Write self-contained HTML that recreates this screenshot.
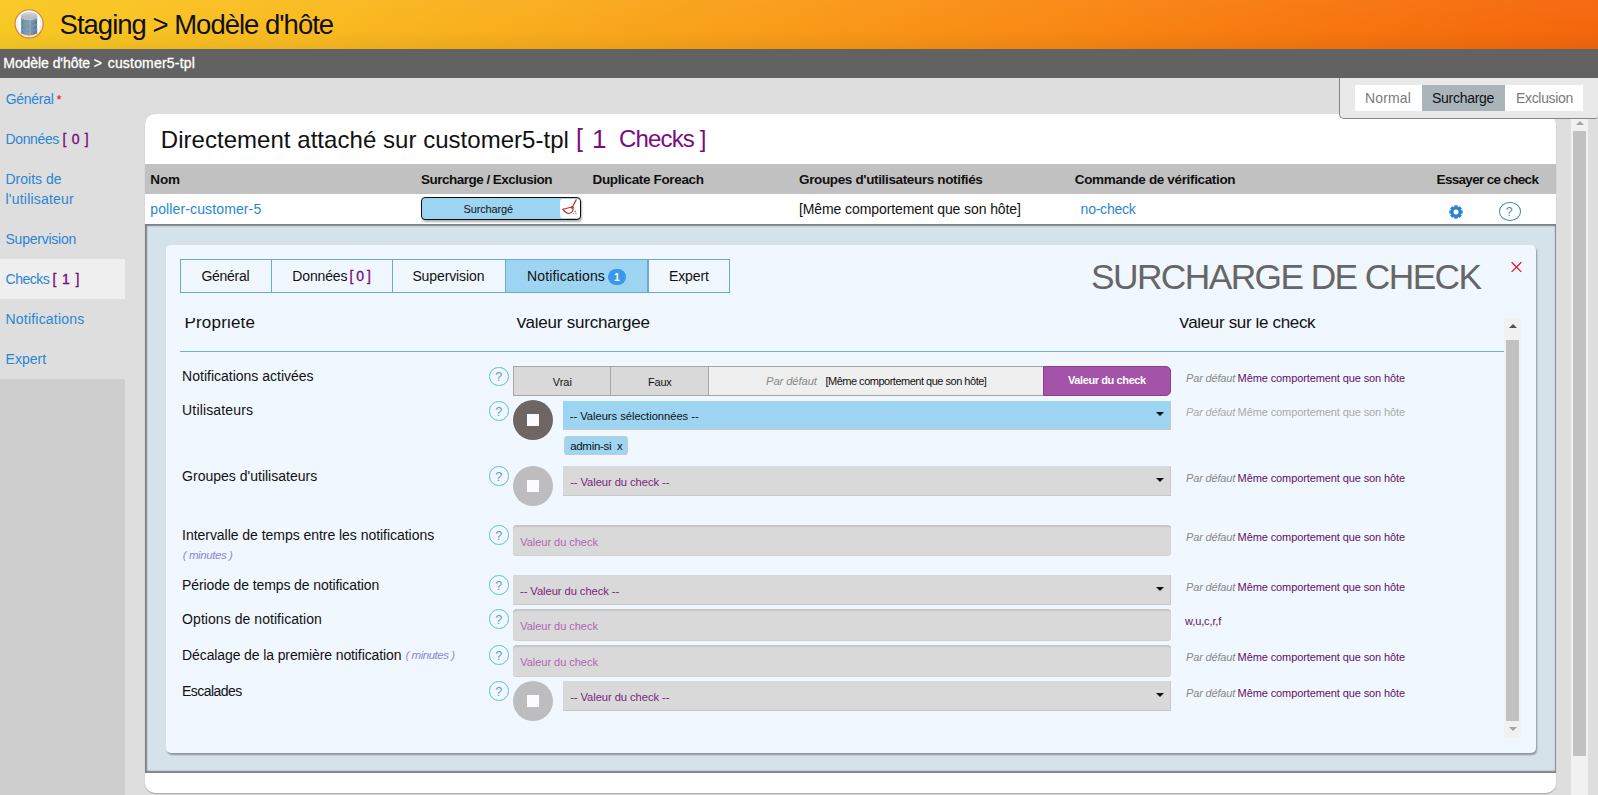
<!DOCTYPE html>
<html><head><meta charset="utf-8"><title>Staging</title>
<style>
html,body{margin:0;padding:0;}
body{width:1598px;height:795px;overflow:hidden;position:relative;background:#dedede;font-family:"Liberation Sans",sans-serif;}
.t{position:absolute;white-space:nowrap;}
</style></head><body>
<div style="position:absolute;left:0px;top:0px;width:1598px;height:49px;background:linear-gradient(95deg,#f9c924 0%,#f9ba20 20%,#f9a01a 45%,#f98a14 65%,#f7770f 82%,#f5660c 100%);"></div>
<div style="position:absolute;left:0px;top:0px;width:1598px;height:49px;background:linear-gradient(to bottom,rgba(255,255,255,0.03) 0%,rgba(0,0,0,0) 60%,rgba(0,0,0,0.05) 100%);"></div>
<svg style="position:absolute;left:12px;top:6px" width="36" height="36" viewBox="0 0 36 36">
<defs><radialGradient id="cg" cx="50%" cy="45%" r="55%"><stop offset="60%" stop-color="#ffffff"/><stop offset="100%" stop-color="#e6e6e6"/></radialGradient>
<linearGradient id="bg1" x1="0" x2="1" y1="0" y2="0"><stop offset="0" stop-color="#7d7d7d"/><stop offset="0.35" stop-color="#9a9a9a"/><stop offset="0.7" stop-color="#8a8a8a"/><stop offset="1" stop-color="#6f6f6f"/></linearGradient>
<linearGradient id="tg1" x1="0" x2="0" y1="0" y2="1"><stop offset="0" stop-color="#d8d8d8"/><stop offset="1" stop-color="#b0b0b0"/></linearGradient></defs>
<circle cx="17.1" cy="17.8" r="14.1" fill="url(#cg)" stroke="#c98532" stroke-width="1.1"/>
<path d="M9.1 9.6 L9.1 27.6 Q17.1 31.8 25.1 27.6 L25.1 9.6 Z" fill="url(#bg1)"/>
<ellipse cx="17.1" cy="9.6" rx="8" ry="3.6" fill="url(#tg1)"/>
<path d="M9.1 12.2 Q17.1 16.6 25.1 12.2 L25.1 9.6 Q17.1 13.6 9.1 9.6 Z" fill="#bdbdbd"/>
<path d="M9.1 13.4 Q17.1 17.6 25.1 13.4" stroke="#45a6e8" stroke-width="1.6" fill="none"/>
<path d="M9.1 18.4 Q17.1 22.6 25.1 18.4" stroke="#45a6e8" stroke-width="1.6" fill="none"/>
<path d="M9.1 23.1 Q17.1 27.3 25.1 23.1" stroke="#45a6e8" stroke-width="1.6" fill="none"/>
<line x1="18.1" y1="13" x2="18.1" y2="29.5" stroke="rgba(255,255,255,0.35)" stroke-width="0.8"/>
</svg>
<div class="t" style="left:59.6px;top:10.52px;font-size:27.5px;line-height:27.5px;color:#111;font-weight:normal;font-style:normal;letter-spacing:-1.000px;">Staging &gt; Modèle d'hôte</div>
<div style="position:absolute;left:0px;top:49px;width:1598px;height:29px;background:#626262;"></div>
<div class="t" style="left:3.3px;top:55.55px;font-size:14px;line-height:14px;color:#fff;font-weight:normal;font-style:normal;letter-spacing:-0.065px;-webkit-text-stroke:0.3px #fff;">Modèle d'hôte &gt;</div>
<div class="t" style="left:107.7px;top:55.55px;font-size:14px;line-height:14px;color:#fff;font-weight:normal;font-style:normal;letter-spacing:0.192px;-webkit-text-stroke:0.3px #fff;">customer5-tpl</div>
<div style="position:absolute;left:0px;top:259px;width:125px;height:40px;background:#efefef;"></div>
<div style="position:absolute;left:0px;top:379px;width:125px;height:416px;background:#cecece;"></div>
<div class="t" style="left:5.7px;top:92.15px;font-size:14px;line-height:14px;color:#2886d4;font-weight:normal;font-style:normal;letter-spacing:-0.287px;">Général</div>
<div class="t" style="left:56.6px;top:93.00px;font-size:13px;line-height:13px;color:#e8001c;font-weight:normal;font-style:normal;">*</div>
<div class="t" style="left:5.5px;top:132.15px;font-size:14px;line-height:14px;color:#2886d4;font-weight:normal;font-style:normal;letter-spacing:-0.363px;">Données</div>
<div class="t" style="left:62.4px;top:132.15px;font-size:14px;line-height:14px;color:#790c80;font-weight:normal;font-style:normal;letter-spacing:0.731px;-webkit-text-stroke:0.35px #790c80;">[ 0 ]</div>
<div class="t" style="left:5.5px;top:172.35px;font-size:14px;line-height:14px;color:#2886d4;font-weight:normal;font-style:normal;letter-spacing:-0.002px;">Droits de</div>
<div class="t" style="left:5.5px;top:191.65px;font-size:14px;line-height:14px;color:#2886d4;font-weight:normal;font-style:normal;letter-spacing:0.215px;">l'utilisateur</div>
<div class="t" style="left:5.5px;top:231.85px;font-size:14px;line-height:14px;color:#2886d4;font-weight:normal;font-style:normal;letter-spacing:-0.241px;">Supervision</div>
<div class="t" style="left:5.5px;top:271.95px;font-size:14px;line-height:14px;color:#2886d4;font-weight:normal;font-style:normal;letter-spacing:-0.480px;">Checks</div>
<div class="t" style="left:52.6px;top:271.95px;font-size:14px;line-height:14px;color:#790c80;font-weight:normal;font-style:normal;letter-spacing:0.871px;-webkit-text-stroke:0.35px #790c80;">[ 1 ]</div>
<div class="t" style="left:5.5px;top:311.55px;font-size:14px;line-height:14px;color:#2886d4;font-weight:normal;font-style:normal;letter-spacing:0.211px;">Notifications</div>
<div class="t" style="left:5.5px;top:351.65px;font-size:14px;line-height:14px;color:#2886d4;font-weight:normal;font-style:normal;letter-spacing:0.040px;">Expert</div>
<div style="position:absolute;left:145px;top:114px;width:1411px;height:679px;background:#fff;border-radius:10px;box-shadow:0 1px 1px rgba(0,0,0,0.25);"></div>
<div class="t" style="left:160.8px;top:127.68px;font-size:24px;line-height:24px;color:#111;font-weight:normal;font-style:normal;letter-spacing:0.037px;">Directement attaché sur customer5-tpl</div>
<div class="t" style="left:576px;top:125.84px;font-size:25px;line-height:25px;color:#790c80;font-weight:normal;font-style:normal;">[</div>
<div class="t" style="left:592px;top:125.59px;font-size:26px;line-height:26px;color:#790c80;font-weight:normal;font-style:normal;">1</div>
<div class="t" style="left:618.9px;top:127.28px;font-size:24px;line-height:24px;color:#790c80;font-weight:normal;font-style:normal;letter-spacing:-0.820px;">Checks ]</div>
<div style="position:absolute;left:145px;top:164px;width:1411px;height:29.5px;background:#c1c1c1;"></div>
<div class="t" style="left:150.3px;top:172.87px;font-size:13.5px;line-height:13.5px;color:#111;font-weight:bold;font-style:normal;letter-spacing:-0.166px;">Nom</div>
<div class="t" style="left:421px;top:172.87px;font-size:13.5px;line-height:13.5px;color:#111;font-weight:bold;font-style:normal;letter-spacing:-0.514px;">Surcharge / Exclusion</div>
<div class="t" style="left:592.5px;top:172.87px;font-size:13.5px;line-height:13.5px;color:#111;font-weight:bold;font-style:normal;letter-spacing:-0.349px;">Duplicate Foreach</div>
<div class="t" style="left:799px;top:172.87px;font-size:13.5px;line-height:13.5px;color:#111;font-weight:bold;font-style:normal;letter-spacing:-0.355px;">Groupes d'utilisateurs notifiés</div>
<div class="t" style="left:1074.8px;top:172.87px;font-size:13.5px;line-height:13.5px;color:#111;font-weight:bold;font-style:normal;letter-spacing:-0.350px;">Commande de vérification</div>
<div class="t" style="left:1436.6px;top:172.87px;font-size:13.5px;line-height:13.5px;color:#111;font-weight:bold;font-style:normal;letter-spacing:-0.687px;">Essayer ce check</div>
<div class="t" style="left:150.3px;top:201.85px;font-size:14px;line-height:14px;color:#2886d4;font-weight:normal;font-style:normal;letter-spacing:0.122px;">poller-customer-5</div>
<div style="position:absolute;left:421px;top:197px;width:158px;height:20.5px;background:#9dd4f1;border:1px solid #111;border-radius:4px;box-shadow:1px 2px 2px rgba(0,0,0,0.3);"></div>
<div class="t" style="left:463.5px;top:203.69px;font-size:11px;line-height:11px;color:#111;font-weight:normal;font-style:normal;letter-spacing:-0.139px;">Surchargé</div>
<div style="position:absolute;left:560px;top:199px;width:20px;height:18.5px;background:#fff;border-radius:3px;"></div>
<svg style="position:absolute;left:561px;top:199px" width="18" height="18" viewBox="0 0 18 18">
<path d="M15.4 0.4 L11.4 8" stroke="#b0392c" stroke-width="1.2" fill="none"/>
<path d="M11.3 7.8 C9 8.6 4.5 9.6 1.9 10.3 C3.5 12.6 6 14.2 8 14.5 C9.6 14 11.3 13.2 11.6 12.4 C12.2 10.8 12.2 9.2 11.3 7.8 Z" stroke="#b0392c" stroke-width="1.2" fill="none"/>
<circle cx="11.3" cy="8.6" r="1.4" fill="#b0392c"/>
<circle cx="14.2" cy="12.5" r="0.7" fill="#b0392c"/><circle cx="12.6" cy="14.5" r="0.55" fill="#b0392c"/><circle cx="15" cy="14.6" r="0.55" fill="#b0392c"/>
</svg>
<div class="t" style="left:799px;top:201.85px;font-size:14px;line-height:14px;color:#111;font-weight:normal;font-style:normal;letter-spacing:-0.097px;">[Même comportement que son hôte]</div>
<div class="t" style="left:1080.6px;top:201.85px;font-size:14px;line-height:14px;color:#2886d4;font-weight:normal;font-style:normal;letter-spacing:-0.238px;">no-check</div>
<svg style="position:absolute;left:1449px;top:205px" width="14" height="14" viewBox="0 0 14 14">
<g fill="#2d80d0"><circle cx="7" cy="7" r="5.2"/>
<rect x="5.3" y="0.3" width="3.4" height="13.4"/><rect x="0.3" y="5.3" width="13.4" height="3.4"/>
<rect x="5.3" y="0.3" width="3.4" height="13.4" transform="rotate(45 7 7)"/><rect x="0.3" y="5.3" width="13.4" height="3.4" transform="rotate(45 7 7)"/></g>
<circle cx="7" cy="7" r="2.5" fill="#fff"/></svg>
<div style="position:absolute;left:1499px;top:202px;width:19.5px;height:16.5px;border:1.5px solid #3a88aa;border-radius:50%;"></div>
<div class="t" style="left:1505.8px;top:205.92px;font-size:12.5px;line-height:12.5px;color:#5a8aa8;font-weight:normal;font-style:normal;">?</div>
<div style="position:absolute;left:145px;top:224px;width:1411px;height:549px;background:#d6e2ea;box-shadow:inset 2px 2px 1.5px #7a7f83, inset 0 -2px 1.5px #7a7f83, inset -1px 0 1px #8a8f93;"></div>
<div style="position:absolute;left:166px;top:245px;width:1370px;height:507.5px;background:#f0f7fe;border-radius:5px;box-shadow:1px 2px 2px rgba(0,0,0,0.35);"></div>
<div style="position:absolute;left:180px;top:259px;width:549.5px;height:34px;border:1px solid #6aaad0;box-sizing:border-box;"></div>
<div style="position:absolute;left:505px;top:259px;width:142.5px;height:34px;background:#9dd4f1;border-top:1px solid #6aaad0;border-bottom:1px solid #6aaad0;box-sizing:border-box;"></div>
<div style="position:absolute;left:270.5px;top:259px;width:1.5px;height:34px;background:#6aaad0;"></div>
<div style="position:absolute;left:391.5px;top:259px;width:1.5px;height:34px;background:#6aaad0;"></div>
<div style="position:absolute;left:504.5px;top:259px;width:1.5px;height:34px;background:#6aaad0;"></div>
<div style="position:absolute;left:647px;top:259px;width:1.5px;height:34px;background:#6aaad0;"></div>
<div class="t" style="left:201.5px;top:269.35px;font-size:14px;line-height:14px;color:#111;font-weight:normal;font-style:normal;letter-spacing:-0.287px;">Général</div>
<div class="t" style="left:292.3px;top:269.35px;font-size:14px;line-height:14px;color:#111;font-weight:normal;font-style:normal;letter-spacing:-0.149px;">Données</div>
<div class="t" style="left:349.5px;top:269.35px;font-size:14px;line-height:14px;color:#790c80;font-weight:normal;font-style:normal;letter-spacing:-0.469px;-webkit-text-stroke:0.3px #790c80;">[ 0 ]</div>
<div class="t" style="left:412.4px;top:269.35px;font-size:14px;line-height:14px;color:#111;font-weight:normal;font-style:normal;letter-spacing:-0.105px;">Supervision</div>
<div class="t" style="left:527px;top:269.35px;font-size:14px;line-height:14px;color:#111;font-weight:normal;font-style:normal;letter-spacing:0.134px;">Notifications</div>
<div style="position:absolute;left:608px;top:269px;width:18px;height:15.7px;background:#3a98ec;border-radius:8px;"></div>
<div class="t" style="left:614px;top:272.31px;font-size:10.5px;line-height:10.5px;color:#fff;font-weight:bold;font-style:normal;">1</div>
<div class="t" style="left:668.9px;top:269.35px;font-size:14px;line-height:14px;color:#111;font-weight:normal;font-style:normal;letter-spacing:-0.094px;">Expert</div>
<div class="t" style="left:1091px;top:259.02px;font-size:35.3px;line-height:35.3px;color:#666;font-weight:normal;font-style:normal;letter-spacing:-1.569px;">SURCHARGE DE CHECK</div>
<svg style="position:absolute;left:1510px;top:261px" width="13" height="12" viewBox="0 0 13 12">
<path d="M1.6 1.2 L11.3 10.9 M11.3 1.2 L1.6 10.9" stroke="#f01020" stroke-width="1.25"/></svg>
<div style="position:absolute;left:166px;top:318px;width:1338px;height:420px;overflow:hidden;">
<div class="t" style="left:18.5px;top:-3.79px;font-size:17px;line-height:17px;color:#111;font-weight:normal;font-style:normal;letter-spacing:0.180px;">Propriété</div>
<div class="t" style="left:349.70000000000005px;top:-3.79px;font-size:17px;line-height:17px;color:#111;font-weight:normal;font-style:normal;letter-spacing:-0.215px;">Valeur surchargée</div>
<div class="t" style="left:1012.5px;top:-3.79px;font-size:17px;line-height:17px;color:#111;font-weight:normal;font-style:normal;letter-spacing:-0.348px;">Valeur sur le check</div>
<div style="position:absolute;left:14px;top:32.5px;width:1324px;height:1.5px;background:#6ab2d6;"></div>
<div class="t" style="left:16.099999999999994px;top:51.15px;font-size:14px;line-height:14px;color:#111;font-weight:normal;font-style:normal;letter-spacing:-0.000px;">Notifications activées</div>
<div style="position:absolute;left:323px;top:48.5px;width:17.5px;height:17.5px;border:1.3px solid #5bbde0;border-radius:50%;"></div>
<div class="t" style="left:329.3px;top:53.12px;font-size:12.5px;line-height:12.5px;color:#5a9ec6;font-weight:normal;font-style:normal;">?</div>
<div style="position:absolute;left:347px;top:48px;width:97.8px;height:30px;background:#d9d9d9;border:1px solid #a6a6a6;box-sizing:border-box;"></div>
<div style="position:absolute;left:444px;top:48px;width:99px;height:30px;background:#d9d9d9;border:1px solid #a6a6a6;box-sizing:border-box;"></div>
<div style="position:absolute;left:542.5px;top:48px;width:335px;height:30px;background:#efefef;border:1px solid #a6a6a6;border-left:none;box-sizing:border-box;"></div>
<div class="t" style="left:386.79999999999995px;top:58.69px;font-size:11px;line-height:11px;color:#111;font-weight:normal;font-style:normal;letter-spacing:-0.038px;">Vrai</div>
<div class="t" style="left:482px;top:58.69px;font-size:11px;line-height:11px;color:#111;font-weight:normal;font-style:normal;letter-spacing:-0.214px;">Faux</div>
<div class="t" style="left:600px;top:57.82px;font-size:11.2px;line-height:11.2px;color:#888;font-weight:normal;font-style:italic;letter-spacing:-0.082px;">Par défaut</div>
<div class="t" style="left:659.4px;top:57.69px;font-size:11px;line-height:11px;color:#111;font-weight:normal;font-style:normal;letter-spacing:-0.491px;">[Même comportement que son hôte]</div>
<div style="position:absolute;left:877px;top:48px;width:128px;height:30px;background:#a353a8;border:1px solid #8c3e92;border-radius:0 5px 5px 0;box-sizing:border-box;"></div>
<div class="t" style="left:902px;top:57.39px;font-size:11px;line-height:11px;color:#fff;font-weight:bold;font-style:normal;letter-spacing:-0.397px;">Valeur du check</div>
<div class="t" style="left:1020px;top:54.59px;font-size:11px;line-height:11px;color:#888;font-weight:normal;font-style:italic;letter-spacing:-0.156px;">Par défaut</div>
<div class="t" style="left:1071.6px;top:54.59px;font-size:11px;line-height:11px;color:#62106a;font-weight:normal;font-style:normal;letter-spacing:-0.106px;">Même comportement que son hôte</div>
<div class="t" style="left:16.099999999999994px;top:85.15px;font-size:14px;line-height:14px;color:#111;font-weight:normal;font-style:normal;letter-spacing:0.147px;">Utilisateurs</div>
<div style="position:absolute;left:323px;top:83px;width:17.5px;height:17.5px;border:1.3px solid #5bbde0;border-radius:50%;"></div>
<div class="t" style="left:329.3px;top:87.62px;font-size:12.5px;line-height:12.5px;color:#5a9ec6;font-weight:normal;font-style:normal;">?</div>
<div style="position:absolute;left:347px;top:82px;width:40px;height:40px;background:#6e6663;border-radius:50%;"></div>
<div style="position:absolute;left:360.8px;top:95.8px;width:12.6px;height:12.6px;background:#fafcff;"></div>
<div style="position:absolute;left:397.3px;top:82.6px;width:607.5px;height:29.2px;background:#9cd4f1;border-right:1px solid #c8c8c8;border-bottom:1px solid #c8c8c8;box-sizing:border-box;"></div>
<div class="t" style="left:403.79999999999995px;top:92.52px;font-size:11.2px;line-height:11.2px;color:#111;font-weight:normal;font-style:normal;letter-spacing:-0.035px;">-- Valeurs sélectionnées --</div>
<div style="position:absolute;left:989.6px;top:93.6px;width:0px;height:0px;border-left:4.4px solid transparent;border-right:4.4px solid transparent;border-top:4.8px solid #111;"></div>
<div class="t" style="left:1020px;top:89.29px;font-size:11px;line-height:11px;color:#aaa;font-weight:normal;font-style:italic;letter-spacing:-0.156px;">Par défaut</div>
<div class="t" style="left:1071.6px;top:89.29px;font-size:11px;line-height:11px;color:#aaa;font-weight:normal;font-style:normal;letter-spacing:-0.106px;">Même comportement que son hôte</div>
<div style="position:absolute;left:398.3px;top:118.2px;width:64px;height:19.3px;background:#9dd5f2;border:1px solid #c9c9c9;border-radius:3px;box-sizing:border-box;"></div>
<div class="t" style="left:404.20000000000005px;top:122.57px;font-size:11.5px;line-height:11.5px;color:#111;font-weight:normal;font-style:normal;letter-spacing:-0.307px;">admin-si</div>
<div class="t" style="left:451px;top:122.57px;font-size:11.5px;line-height:11.5px;color:#111;font-weight:normal;font-style:normal;">x</div>
<div class="t" style="left:16.099999999999994px;top:150.75px;font-size:14px;line-height:14px;color:#111;font-weight:normal;font-style:normal;letter-spacing:0.006px;">Groupes d'utilisateurs</div>
<div style="position:absolute;left:323px;top:148px;width:17.5px;height:17.5px;border:1.3px solid #5bbde0;border-radius:50%;"></div>
<div class="t" style="left:329.3px;top:152.62px;font-size:12.5px;line-height:12.5px;color:#5a9ec6;font-weight:normal;font-style:normal;">?</div>
<div style="position:absolute;left:347px;top:148px;width:40px;height:40px;background:#bdbdc0;border-radius:50%;"></div>
<div style="position:absolute;left:360.8px;top:161.8px;width:12.6px;height:12.6px;background:#fafcff;"></div>
<div style="position:absolute;left:397px;top:148.2px;width:608px;height:29.5px;background:#d9d9d9;border-right:1px solid #c8c8c8;border-bottom:1px solid #c8c8c8;box-sizing:border-box;"></div>
<div class="t" style="left:404.20000000000005px;top:159.02px;font-size:11.2px;line-height:11.2px;color:#7a1f80;font-weight:normal;font-style:normal;letter-spacing:-0.067px;">-- Valeur du check --</div>
<div style="position:absolute;left:989.6px;top:159.6px;width:0px;height:0px;border-left:4.4px solid transparent;border-right:4.4px solid transparent;border-top:4.8px solid #111;"></div>
<div class="t" style="left:1020px;top:155.09px;font-size:11px;line-height:11px;color:#888;font-weight:normal;font-style:italic;letter-spacing:-0.156px;">Par défaut</div>
<div class="t" style="left:1071.6px;top:155.09px;font-size:11px;line-height:11px;color:#62106a;font-weight:normal;font-style:normal;letter-spacing:-0.106px;">Même comportement que son hôte</div>
<div class="t" style="left:16.099999999999994px;top:210.05px;font-size:14px;line-height:14px;color:#111;font-weight:normal;font-style:normal;letter-spacing:-0.039px;">Intervalle de temps entre les notifications</div>
<div class="t" style="left:16.69999999999999px;top:232.07px;font-size:11.5px;line-height:11.5px;color:#8d86d6;font-weight:normal;font-style:italic;letter-spacing:-0.411px;">( minutes )</div>
<div style="position:absolute;left:323px;top:207px;width:17.5px;height:17.5px;border:1.3px solid #5bbde0;border-radius:50%;"></div>
<div class="t" style="left:329.3px;top:211.62px;font-size:12.5px;line-height:12.5px;color:#5a9ec6;font-weight:normal;font-style:normal;">?</div>
<div style="position:absolute;left:347.1px;top:207px;width:658px;height:31.3px;background:#d9d9d9;border-radius:4px;box-shadow:inset 0 2px 1px #c4c4c4, inset 0 -1px 0 #cfcfcf;"></div>
<div class="t" style="left:354.29999999999995px;top:218.79px;font-size:11px;line-height:11px;color:#b066b3;font-weight:normal;font-style:normal;letter-spacing:-0.031px;">Valeur du check</div>
<div class="t" style="left:1020px;top:213.89px;font-size:11px;line-height:11px;color:#888;font-weight:normal;font-style:italic;letter-spacing:-0.156px;">Par défaut</div>
<div class="t" style="left:1071.6px;top:213.89px;font-size:11px;line-height:11px;color:#62106a;font-weight:normal;font-style:normal;letter-spacing:-0.106px;">Même comportement que son hôte</div>
<div class="t" style="left:16.099999999999994px;top:260.35px;font-size:14px;line-height:14px;color:#111;font-weight:normal;font-style:normal;letter-spacing:-0.094px;">Période de temps de notification</div>
<div style="position:absolute;left:323px;top:257px;width:17.5px;height:17.5px;border:1.3px solid #5bbde0;border-radius:50%;"></div>
<div class="t" style="left:329.3px;top:261.62px;font-size:12.5px;line-height:12.5px;color:#5a9ec6;font-weight:normal;font-style:normal;">?</div>
<div style="position:absolute;left:347.1px;top:257.1px;width:658px;height:29.6px;background:#d9d9d9;border-right:1px solid #c8c8c8;border-bottom:1px solid #c8c8c8;box-sizing:border-box;"></div>
<div class="t" style="left:354px;top:268.02px;font-size:11.2px;line-height:11.2px;color:#7a1f80;font-weight:normal;font-style:normal;letter-spacing:-0.067px;">-- Valeur du check --</div>
<div style="position:absolute;left:989.6px;top:268.6px;width:0px;height:0px;border-left:4.4px solid transparent;border-right:4.4px solid transparent;border-top:4.8px solid #111;"></div>
<div class="t" style="left:1020px;top:264.19px;font-size:11px;line-height:11px;color:#888;font-weight:normal;font-style:italic;letter-spacing:-0.156px;">Par défaut</div>
<div class="t" style="left:1071.6px;top:264.19px;font-size:11px;line-height:11px;color:#62106a;font-weight:normal;font-style:normal;letter-spacing:-0.106px;">Même comportement que son hôte</div>
<div class="t" style="left:16.099999999999994px;top:294.15px;font-size:14px;line-height:14px;color:#111;font-weight:normal;font-style:normal;letter-spacing:0.055px;">Options de notification</div>
<div style="position:absolute;left:323px;top:291px;width:17.5px;height:17.5px;border:1.3px solid #5bbde0;border-radius:50%;"></div>
<div class="t" style="left:329.3px;top:295.62px;font-size:12.5px;line-height:12.5px;color:#5a9ec6;font-weight:normal;font-style:normal;">?</div>
<div style="position:absolute;left:347.1px;top:291.3px;width:658px;height:31.3px;background:#d9d9d9;border-radius:4px;box-shadow:inset 0 2px 1px #c4c4c4, inset 0 -1px 0 #cfcfcf;"></div>
<div class="t" style="left:354.29999999999995px;top:303.09px;font-size:11px;line-height:11px;color:#b066b3;font-weight:normal;font-style:normal;letter-spacing:-0.031px;">Valeur du check</div>
<div class="t" style="left:1019px;top:297.89px;font-size:11px;line-height:11px;color:#62106a;font-weight:normal;font-style:normal;letter-spacing:-0.121px;">w,u,c,r,f</div>
<div class="t" style="left:16.099999999999994px;top:330.15px;font-size:14px;line-height:14px;color:#111;font-weight:normal;font-style:normal;letter-spacing:-0.115px;">Décalage de la première notification</div>
<div class="t" style="left:239.39999999999998px;top:332.27px;font-size:11.5px;line-height:11.5px;color:#8d86d6;font-weight:normal;font-style:italic;letter-spacing:-0.456px;">( minutes )</div>
<div style="position:absolute;left:323px;top:327px;width:17.5px;height:17.5px;border:1.3px solid #5bbde0;border-radius:50%;"></div>
<div class="t" style="left:329.3px;top:331.62px;font-size:12.5px;line-height:12.5px;color:#5a9ec6;font-weight:normal;font-style:normal;">?</div>
<div style="position:absolute;left:347.1px;top:327.3px;width:658px;height:31.3px;background:#d9d9d9;border-radius:4px;box-shadow:inset 0 2px 1px #c4c4c4, inset 0 -1px 0 #cfcfcf;"></div>
<div class="t" style="left:354.29999999999995px;top:339.09px;font-size:11px;line-height:11px;color:#b066b3;font-weight:normal;font-style:normal;letter-spacing:-0.031px;">Valeur du check</div>
<div class="t" style="left:1020px;top:333.99px;font-size:11px;line-height:11px;color:#888;font-weight:normal;font-style:italic;letter-spacing:-0.156px;">Par défaut</div>
<div class="t" style="left:1071.6px;top:333.99px;font-size:11px;line-height:11px;color:#62106a;font-weight:normal;font-style:normal;letter-spacing:-0.106px;">Même comportement que son hôte</div>
<div class="t" style="left:16.099999999999994px;top:366.15px;font-size:14px;line-height:14px;color:#111;font-weight:normal;font-style:normal;letter-spacing:-0.566px;">Escalades</div>
<div style="position:absolute;left:323px;top:363px;width:17.5px;height:17.5px;border:1.3px solid #5bbde0;border-radius:50%;"></div>
<div class="t" style="left:329.3px;top:367.62px;font-size:12.5px;line-height:12.5px;color:#5a9ec6;font-weight:normal;font-style:normal;">?</div>
<div style="position:absolute;left:347px;top:363px;width:40px;height:40px;background:#bdbdc0;border-radius:50%;"></div>
<div style="position:absolute;left:360.8px;top:376.8px;width:12.6px;height:12.6px;background:#fafcff;"></div>
<div style="position:absolute;left:397px;top:363.3px;width:608px;height:29.4px;background:#d9d9d9;border-right:1px solid #c8c8c8;border-bottom:1px solid #c8c8c8;box-sizing:border-box;"></div>
<div class="t" style="left:404.20000000000005px;top:374.02px;font-size:11.2px;line-height:11.2px;color:#7a1f80;font-weight:normal;font-style:normal;letter-spacing:-0.067px;">-- Valeur du check --</div>
<div style="position:absolute;left:989.6px;top:374.6px;width:0px;height:0px;border-left:4.4px solid transparent;border-right:4.4px solid transparent;border-top:4.8px solid #111;"></div>
<div class="t" style="left:1020px;top:370.19px;font-size:11px;line-height:11px;color:#888;font-weight:normal;font-style:italic;letter-spacing:-0.156px;">Par défaut</div>
<div class="t" style="left:1071.6px;top:370.19px;font-size:11px;line-height:11px;color:#62106a;font-weight:normal;font-style:normal;letter-spacing:-0.106px;">Même comportement que son hôte</div>
</div>
<div style="position:absolute;left:1504px;top:318px;width:17px;height:420px;background:#f1f1f1;"></div>
<div style="position:absolute;left:1506px;top:340px;width:13px;height:381px;background:#c1c1c1;"></div>
<div style="position:absolute;left:1508.5px;top:324px;width:0px;height:0px;border-left:4px solid transparent;border-right:4px solid transparent;border-bottom:4px solid #505050;"></div>
<div style="position:absolute;left:1508.5px;top:727px;width:0px;height:0px;border-left:4px solid transparent;border-right:4px solid transparent;border-top:4px solid #a3a3a3;"></div>
<div style="position:absolute;left:1571px;top:118px;width:17px;height:677px;background:#f1f1f1;"></div>
<div style="position:absolute;left:1573px;top:131.4px;width:13px;height:624.6px;background:#c1c1c1;"></div>
<div style="position:absolute;left:1575.5px;top:121px;width:0px;height:0px;border-left:4px solid transparent;border-right:4px solid transparent;border-bottom:4px solid #a3a3a3;"></div>
<div style="position:absolute;left:1339px;top:78px;width:259px;height:41px;background:#e9e9e9;border-left:1.5px solid #858585;border-bottom:1.5px solid #858585;border-bottom-left-radius:5px;border-bottom-right-radius:3px;box-sizing:border-box;"></div>
<div style="position:absolute;left:1355px;top:85px;width:228px;height:26px;background:#fff;"></div>
<div style="position:absolute;left:1422px;top:85px;width:83px;height:26px;background:#a9b4bb;"></div>
<div class="t" style="left:1365px;top:90.75px;font-size:14px;line-height:14px;color:#7a7a7a;font-weight:normal;font-style:normal;letter-spacing:0.147px;">Normal</div>
<div class="t" style="left:1432px;top:90.75px;font-size:14px;line-height:14px;color:#111;font-weight:normal;font-style:normal;letter-spacing:-0.288px;">Surcharge</div>
<div class="t" style="left:1516px;top:90.75px;font-size:14px;line-height:14px;color:#7a7a7a;font-weight:normal;font-style:normal;letter-spacing:-0.324px;">Exclusion</div>
</body></html>
